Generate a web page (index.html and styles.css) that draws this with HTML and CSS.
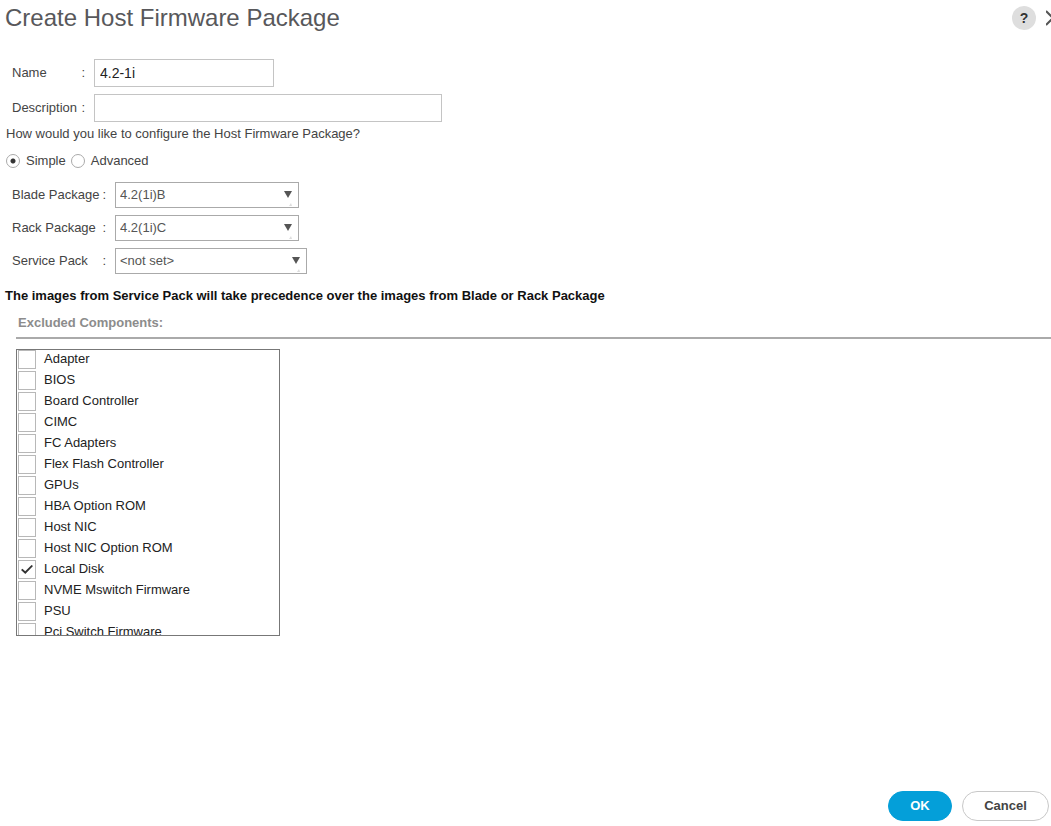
FILE: index.html
```html
<!DOCTYPE html>
<html lang="en">
<head>
    <meta charset="UTF-8">
    <meta name="viewport" content="width=device-width, initial-scale=1.0">
    <title>Create Host Firmware Package</title>
    <link rel="stylesheet" href="styles.css">
</head>
<body>
    <form class="dialog">
        <header class="dialog-header">
            <h1>Create Host Firmware Package</h1>
            <button type="button" class="help" aria-label="Help">?</button>
            <button type="button" class="close" aria-label="Close">
                <svg width="14" height="16" viewBox="0 0 14 16"><path d="M0 1 L14 15 M14 1 L0 15" /></svg>
            </button>
        </header>

        <!-- Name and description -->
        <div class="fields">
            <div class="field">
                <label for="name"><span>Name</span><span>:</span></label>
                <input type="text" id="name" class="short" value="4.2-1i">
            </div>
            <div class="field">
                <label for="description"><span>Description</span><span>:</span></label>
                <input type="text" id="description" class="long">
            </div>
        </div>

        <!-- Simple or advanced mode -->
        <fieldset class="mode">
            <legend>How would you like to configure the Host Firmware Package?</legend>
            <input type="radio" name="mode" id="simple" checked>
            <label for="simple">Simple</label>
            <input type="radio" name="mode" id="advanced">
            <label for="advanced">Advanced</label>
        </fieldset>

        <!-- Package versions -->
        <div class="packages">
            <div class="field">
                <label for="blade"><span>Blade Package</span><span>:</span></label>
                <div class="select">
                    <select id="blade"><option>4.2(1i)B</option></select>
                    <svg class="arrow" width="10" height="18" viewBox="0 0 10 18"><path d="M0 0 H8 L4 7 Z" /><path class="corner" d="M5 15 L7 12 L8 15 Z" /></svg>
                </div>
            </div>
            <div class="field">
                <label for="rack"><span>Rack Package</span><span>:</span></label>
                <div class="select">
                    <select id="rack"><option>4.2(1i)C</option></select>
                    <svg class="arrow" width="10" height="18" viewBox="0 0 10 18"><path d="M0 0 H8 L4 7 Z" /><path class="corner" d="M5 15 L7 12 L8 15 Z" /></svg>
                </div>
            </div>
            <div class="field">
                <label for="service"><span>Service Pack</span><span>:</span></label>
                <div class="select wide">
                    <select id="service"><option>&lt;not set&gt;</option></select>
                    <svg class="arrow" width="10" height="18" viewBox="0 0 10 18"><path d="M0 0 H8 L4 7 Z" /><path class="corner" d="M5 15 L7 12 L8 15 Z" /></svg>
                </div>
            </div>
        </div>

        <p class="note">The images from Service Pack will take precedence over the images from Blade or Rack Package</p>

        <section class="excluded">
            <h2>Excluded Components:</h2>
            <div class="components">
                <label><input type="checkbox">Adapter</label>
                <label><input type="checkbox">BIOS</label>
                <label><input type="checkbox">Board Controller</label>
                <label><input type="checkbox">CIMC</label>
                <label><input type="checkbox">FC Adapters</label>
                <label><input type="checkbox">Flex Flash Controller</label>
                <label><input type="checkbox">GPUs</label>
                <label><input type="checkbox">HBA Option ROM</label>
                <label><input type="checkbox">Host NIC</label>
                <label><input type="checkbox">Host NIC Option ROM</label>
                <label><input type="checkbox" checked>Local Disk</label>
                <label><input type="checkbox">NVME Mswitch Firmware</label>
                <label><input type="checkbox">PSU</label>
                <label><input type="checkbox">Pci Switch Firmware</label>
            </div>
        </section>

        <footer class="actions">
            <button type="submit" class="ok">OK</button>
            <button type="button" class="cancel">Cancel</button>
        </footer>
    </form>
</body>
</html>
```
FILE: styles.css
```css
* {
    box-sizing: border-box;
}

body {
    margin: 0;
    background-color: #fff;
    color: #444;
    font-family: "Liberation Sans", Arial, sans-serif;
    font-size: 13px;
    line-height: 18px;
}

input, select, button {
    margin: 0;
    font-family: inherit;
    font-size: 13px;
    line-height: 18px;
}

.dialog {
    display: flex;
    flex-direction: column;
    min-height: 100vh;
    overflow: hidden;
}

/* Header */
.dialog-header {
    display: flex;
    align-items: center;
    height: 36px;
    padding-left: 5px;
}

h1 {
    flex: 1;
    margin: 0;
    font-size: 24px;
    line-height: 36px;
    font-weight: normal;
    color: #58585b;
}

.help {
    width: 24px;
    height: 24px;
    padding: 0;
    border: none;
    border-radius: 50%;
    background-color: #dedede;
    color: #333;
    font-size: 14px;
    font-weight: bold;
}

.close {
    display: flex;
    margin: 0 -9px 0 10px;
    padding: 0;
    border: none;
    background: none;
}

.close path {
    fill: none;
    stroke: #555;
    stroke-width: 2;
}

/* Labelled fields */
.fields, .packages {
    display: flex;
    flex-direction: column;
    gap: 7px;
    padding: 0 12px;
}

.fields {
    margin-top: 23px;
}

.field {
    display: flex;
    align-items: center;
}

.field label {
    display: flex;
    justify-content: space-between;
    width: 73px;
    margin-right: 9px;
}

.packages .field label {
    width: 94px;
}

.field input {
    height: 28px;
    padding: 0 5px;
    border: 1px solid #c4c4c4;
    color: #222;
    font-size: 14px;
}

.short {
    width: 180px;
}

.long {
    width: 348px;
}

/* Simple / Advanced */
.mode {
    display: flex;
    align-items: center;
    margin: 3px 0 0;
    padding: 9px 6px 0;
    border: none;
}

.mode legend {
    padding: 0;
}

.mode label {
    margin: 0 5px 0 6px;
}

.mode input {
    appearance: none;
    width: 14px;
    height: 14px;
    border: 1px solid #aaa;
    border-radius: 50%;
}

.mode input:checked {
    background: radial-gradient(circle, #333 2px, #fff 3px);
}

/* Drop-downs */
.packages {
    margin-top: 12px;
}

.select {
    position: relative;
    width: 184px;
}

.select.wide {
    width: 192px;
}

.select select {
    display: block;
    appearance: none;
    width: 100%;
    height: 26px;
    padding: 0 24px 0 4px;
    border: 1px solid #aaa;
    border-radius: 0;
    background-color: #fff;
    color: #555;
}

.arrow {
    position: absolute;
    top: 9px;
    right: 5px;
    fill: #555;
    pointer-events: none;
}

.arrow .corner {
    fill: #ddd;
}

.note {
    margin: 13px 5px 0;
    font-weight: bold;
    color: #111;
}

/* Excluded components */
.excluded {
    margin: 9px 0 24px 16px;
}

h2 {
    margin: 0 0 10px;
    padding: 0 2px 5px;
    border-bottom: 2px solid #aaa;
    font-size: 13px;
    line-height: 18px;
    color: #8c8c8c;
}

.components {
    width: 264px;
    height: 287px;
    padding-left: 1px;
    border: 1px solid #777;
    overflow: hidden;
}

.components label {
    display: flex;
    align-items: flex-start;
    height: 21px;
    color: #222;
}

.components input {
    appearance: none;
    display: grid;
    place-items: center;
    width: 18px;
    height: 19px;
    margin-right: 8px;
    border: 1px solid #b8b8b8;
}

.components input:checked::before {
    content: "";
    width: 12px;
    height: 9px;
    background-color: #333;
    clip-path: polygon(0 55%, 12% 42%, 35% 70%, 88% 0, 100% 10%, 36% 100%);
}

/* Buttons */
.actions {
    display: flex;
    justify-content: flex-end;
    gap: 10px;
    margin-top: auto;
    padding: 0 2px 5px;
}

.actions button {
    height: 30px;
    border-radius: 15px;
    font-weight: bold;
}

.ok {
    width: 64px;
    border: 1px solid #049fd9;
    background-color: #049fd9;
    color: #fff;
}

.cancel {
    width: 87px;
    border: 1px solid #c8c8c8;
    background-color: #fff;
    color: #444;
}
```
